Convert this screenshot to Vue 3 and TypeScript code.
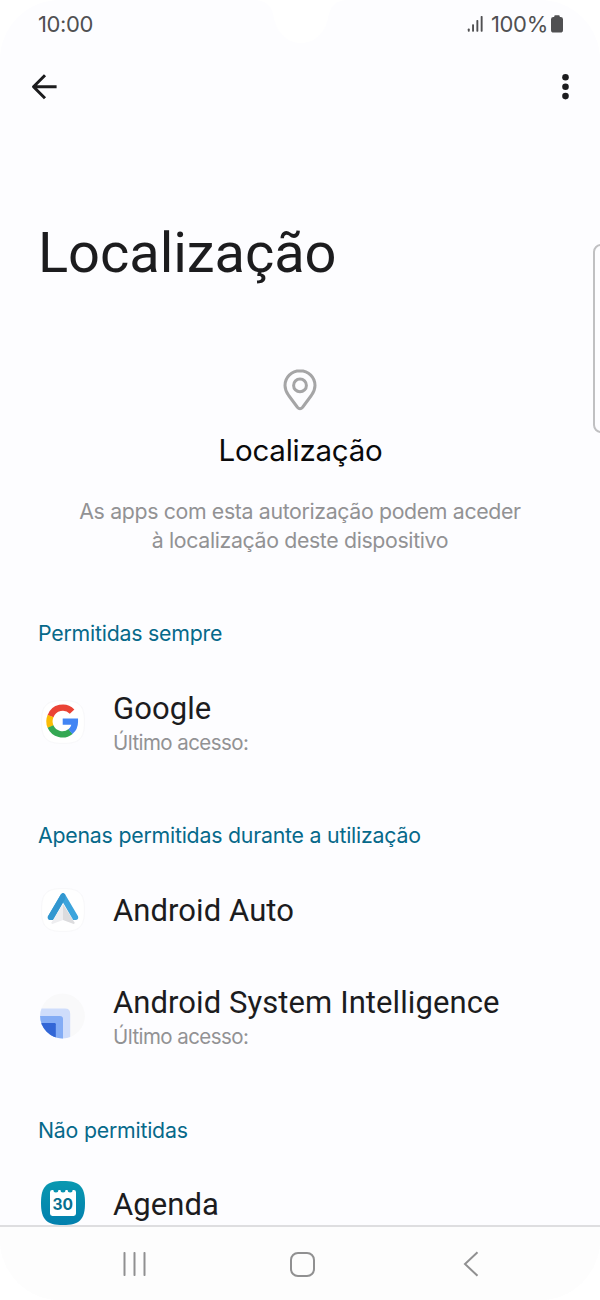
<script setup lang="ts">
type IconName = 'google' | 'auto' | 'intelligence' | 'calendar'

interface AppEntry {
  name: string
  icon: IconName
  detail?: string
}

interface AppGroup {
  id: string
  title: string
  apps: AppEntry[]
}

const groups: AppGroup[] = [
  {
    id: 'always',
    title: 'Permitidas sempre',
    apps: [{ name: 'Google', icon: 'google', detail: 'Último acesso:' }],
  },
  {
    id: 'in-use',
    title: 'Apenas permitidas durante a utilização',
    apps: [
      { name: 'Android Auto', icon: 'auto' },
      { name: 'Android System Intelligence', icon: 'intelligence', detail: 'Último acesso:' },
    ],
  },
  {
    id: 'denied',
    title: 'Não permitidas',
    apps: [{ name: 'Agenda', icon: 'calendar' }],
  },
]
</script>

<template>
  <div class="screen">
    <svg class="notch" viewBox="0 0 90 44" aria-hidden="true">
      <path d="M0 0C12 1 16 8 18 18C21 34 32 43 45 43S69 34 72 18C74 8 78 1 90 0Z" fill="#fff" />
    </svg>
    <div class="edge-handle"></div>

    <header class="status">
      <span class="clock">10:00</span>
      <div class="status-right">
        <svg class="signal" viewBox="0 0 17 18" fill="#505052" aria-hidden="true">
          <rect x="0.8" y="13.6" width="1.9" height="3.2" rx=".7" />
          <rect x="5.1" y="9.2" width="1.9" height="7.6" rx=".7" />
          <rect x="9.4" y="5" width="1.9" height="11.8" rx=".7" />
          <rect x="13.7" y="1" width="1.9" height="15.8" rx=".7" />
        </svg>
        <span class="percent">100%</span>
        <svg class="battery" viewBox="0 0 12 18" fill="#505052" aria-hidden="true">
          <path d="M3.2 1.5Q3.2.3 4.4.3H7.6Q8.8.3 8.8 1.5V1.9H9.6Q12 1.9 12 4.3V15Q12 17.6 9.4 17.6H2.6Q0 17.6 0 15V4.3Q0 1.9 2.4 1.9H3.2Z" />
        </svg>
      </div>
    </header>

    <nav class="toolbar">
      <svg class="back" viewBox="0 0 28 28" fill="none" stroke="#1c1c1e" stroke-width="3" aria-hidden="true">
        <path d="M26.600 13.700H3.500M15 2.200L3.500 13.700L15 25.200" stroke-linejoin="round" />
      </svg>
      <svg class="more" viewBox="0 0 8 28" fill="#1c1c1e" aria-hidden="true">
        <circle cx="4.500" cy="4.300" r="3.300" />
        <circle cx="4.500" cy="13.700" r="3.300" />
        <circle cx="4.500" cy="23.100" r="3.300" />
      </svg>
    </nav>

    <main class="content">
      <h1 class="title">Localização</h1>

      <section class="intro">
        <svg class="pin" viewBox="0 0 34 42" fill="none" stroke="#a5a5a6" stroke-width="3" aria-hidden="true">
          <path d="M17 1.8C8.4 1.8 2 8.3 2 16.4C2 20.5 3.6 23.5 5.7 26.5L14.4 38.2Q17 41.2 19.6 38.2L28.3 26.5C30.4 23.5 32 20.5 32 16.4C32 8.3 25.6 1.8 17 1.8Z" />
          <circle cx="17" cy="16.4" r="6.4" />
        </svg>
        <h2 class="subject">Localização</h2>
        <p class="explain">
          <span>As apps com esta autorização podem aceder</span><br />
          <span>à localização deste dispositivo</span>
        </p>
      </section>

      <section v-for="group in groups" :key="group.id" class="group" :class="group.id">
        <h3 class="group-title">{{ group.title }}</h3>
        <div class="rows">
          <div v-for="app in group.apps" :key="app.name" class="row" :class="{ tall: app.detail }">
            <svg v-if="app.icon === 'google'" class="icon" viewBox="0 0 44 44" aria-hidden="true">
              <path d="M22 .5C38.5.5 43.5 5.5 43.5 22S38.500 43.5 22 43.5S.5 38.500.5 22S5.500.5 22 .5Z" fill="#fff" stroke="#f8f8fa" />
              <g fill="none" stroke-width="6.300">
                <path d="M31.100 11.600A13 13 0 0 0 9.500 16.200" stroke="#ea4335" />
                <path d="M9.600 16A13 13 0 0 0 9.600 26.800" stroke="#fbbc05" />
                <path d="M9.500 26.600A13 13 0 0 0 29.600 31.500" stroke="#34a853" />
                <path d="M29.400 31.600A13 13 0 0 0 33.900 21.700H21.700" stroke="#4285f4" />
              </g>
            </svg>
            <svg v-else-if="app.icon === 'auto'" class="icon" viewBox="0 0 44 44" aria-hidden="true">
              <path d="M22 .5C38.500.5 43.5 5.500 43.5 22S38.500 43.5 22 43.5S.5 38.500.5 22S5.500.5 22 .5Z" fill="#fff" stroke="#f8f8fa" />
              <path d="M22 16L10.500 34.500Q10 36.400 12 35.800L22 32Z" fill="#eeeef0" />
              <path d="M22 16L33.500 34.500Q34 36.400 32 35.800L22 32Z" fill="#dcdcde" />
              <path d="M19.800 6.600Q22 3.400 24.200 6.600L37 28.200Q38 31.600 35 31.900H32.200L22 14.600L11.800 31.900H9Q6 31.600 7 28.200Z" fill="#3ca4dc" />
              <path d="M19.800 6.600Q22 3.400 24.200 6.600L24.200 10.800L11.800 31.900H9Q6 31.600 7 28.200Z" fill="#3297d0" />
            </svg>
            <svg v-else-if="app.icon === 'intelligence'" class="icon" viewBox="0 0 44 44" aria-hidden="true">
              <defs>
                <clipPath id="round-mask"><circle cx="21.500" cy="22" r="22.400" /></clipPath>
              </defs>
              <g clip-path="url(#round-mask)">
                <rect x="-2" y="-2" width="48" height="48" fill="#f9f9fa" />
                <path d="M-2 14.600H24Q29.200 14.600 29.200 19.800V46H-2Z" fill="#cfddfb" />
                <path d="M-2 22H19Q22 22 22 25V46H-2Z" fill="#83acf5" />
                <path d="M-2 29H13.600Q14.800 29 14.800 30.200V46H-2Z" fill="#3266d6" />
              </g>
            </svg>
            <svg v-else class="icon" viewBox="0 0 44 44" aria-hidden="true">
              <defs>
                <linearGradient id="calendar-fill" x1="0" y1="0" x2="0" y2="1">
                  <stop offset="0" stop-color="#0998b0" />
                  <stop offset="1" stop-color="#0280ae" />
                </linearGradient>
              </defs>
              <path d="M22 0C38.500 0 44 5.500 44 22S38.500 44 22 44S0 38.500 0 22S5.500 0 22 0Z" fill="url(#calendar-fill)" />
              <path d="M11.200 9H12.400A2.500 2.500 0 0 0 17.400 9H19.500A2.500 2.500 0 0 0 24.500 9H26.600A2.500 2.500 0 0 0 31.600 9H32.800Q35 9 35 11.200V32.600Q35 35 32.600 35H11.400Q9 35 9 32.600V11.200Q9 9 11.200 9Z" fill="#fff" />
              <text x="21.800" y="28.500" class="day">30</text>
            </svg>
            <div class="labels">
              <span class="name">{{ app.name }}</span>
              <span v-if="app.detail" class="detail">{{ app.detail }}</span>
            </div>
          </div>
        </div>
      </section>
    </main>

    <footer class="navbar">
      <svg class="recents" viewBox="0 0 24 24" fill="#909091" aria-hidden="true">
        <rect x="0.500" y="0" width="2" height="24" rx=".8" />
        <rect x="10.500" y="0" width="2" height="24" rx=".8" />
        <rect x="20.500" y="0" width="2" height="24" rx=".8" />
      </svg>
      <svg class="home" viewBox="0 0 25 25" fill="none" stroke="#909091" stroke-width="2" aria-hidden="true">
        <rect x="1" y="1" width="23" height="23" rx="7" />
      </svg>
      <svg class="return" viewBox="0 0 16 26" fill="none" stroke="#909091" stroke-width="2" aria-hidden="true">
        <path d="M14.500 1.200L2 13L14.500 24.800" />
      </svg>
    </footer>
  </div>
</template>

<style>
body {
  margin: 0;
  background: #fff;
}
</style>

<style scoped>
.screen {
  position: relative;
  display: flex;
  flex-direction: column;
  width: 600px;
  height: 1300px;
  overflow: hidden;
  border-radius: 60px;
  background: #fdfdff;
  font-family: Inter, "Noto Sans", sans-serif;
}
h1, h2, h3, p {
  margin: 0;
  font-weight: 400;
}
svg {
  display: block;
  flex: none;
}
.notch {
  position: absolute;
  top: 0;
  left: 256px;
  width: 90px;
  height: 44px;
}
.edge-handle {
  position: absolute;
  top: 244px;
  right: -10px;
  box-sizing: border-box;
  width: 17px;
  height: 189px;
  border: 2px solid #c0c0c2;
  border-radius: 8px;
}
.status {
  display: flex;
  align-items: center;
  justify-content: space-between;
  box-sizing: border-box;
  height: 48px;
  padding: 0 37px 0 38px;
  color: #505052;
  font-size: 22px;
}
.clock {
  letter-spacing: -0.400px;
}
.status-right {
  display: flex;
  align-items: center;
}
.signal {
  width: 17px;
  height: 18px;
}
.percent {
  margin: 0 3px 0 7px;
  letter-spacing: -0.300px;
}
.battery {
  width: 12px;
  height: 18px;
}
.toolbar {
  display: flex;
  align-items: center;
  justify-content: space-between;
  box-sizing: border-box;
  height: 78px;
  padding: 0 31px 0 30px;
}
.back {
  width: 28px;
  height: 28px;
}
.more {
  width: 8px;
  height: 28px;
}
.content {
  flex: 1;
  min-height: 0;
  overflow: hidden;
}
.title {
  margin: 95px 0 0 38px;
  color: #1c1c1e;
  font-family: Roboto, sans-serif;
  font-size: 56px;
  line-height: 64px;
  letter-spacing: -0.050px;
}
.intro {
  display: flex;
  flex-direction: column;
  align-items: center;
  margin-top: 84px;
}
.pin {
  width: 34px;
  height: 42px;
}
.subject {
  margin-top: 21px;
  padding-left: 1px;
  color: #0a0a0b;
  font-size: 29.500px;
  line-height: 36px;
  letter-spacing: -0.250px;
}
.explain {
  margin-top: 29px;
  color: #929294;
  font-size: 21.300px;
  line-height: 29px;
  letter-spacing: -0.350px;
  text-align: center;
  white-space: nowrap;
}
.group {
  margin-top: 65px;
}
.group.always {
  margin-top: 64px;
}
.group.denied {
  margin-top: 66px;
}
.group-title {
  padding-left: 38px;
  color: #06698a;
  font-size: 21.300px;
  line-height: 28px;
  letter-spacing: -0.220px;
  white-space: nowrap;
}
.rows {
  display: flex;
  flex-direction: column;
  gap: 52px;
  margin-top: 41px;
}
.denied .rows {
  margin-top: 39px;
}
.row {
  display: flex;
  align-items: center;
  gap: 28px;
  height: 40px;
  padding-left: 41px;
}
.row.tall {
  height: 68px;
}
.icon {
  width: 44px;
  height: 44px;
  overflow: visible;
}
.day {
  fill: #08708f;
  font: 700 15.500px Inter, sans-serif;
  text-anchor: middle;
}
.labels {
  display: flex;
  flex-direction: column;
  padding-top: 2px;
  white-space: nowrap;
}
.denied .labels {
  padding-top: 4px;
}
.name {
  color: #1c1c1e;
  font-family: Roboto, sans-serif;
  font-size: 31px;
  line-height: 40px;
  letter-spacing: 0.080px;
}
.detail {
  color: #929294;
  font-size: 20.500px;
  line-height: 28px;
  letter-spacing: -0.570px;
}
.navbar {
  display: flex;
  align-items: center;
  box-sizing: border-box;
  height: 75px;
  padding: 1px 0 0 123px;
  border-top: 2px solid #dedee0;
  background: #fdfdfd;
}
.recents {
  width: 24px;
  height: 24px;
}
.home {
  width: 25px;
  height: 25px;
  margin-left: 143px;
}
.return {
  width: 16px;
  height: 26px;
  margin-left: 148px;
}
</style>
